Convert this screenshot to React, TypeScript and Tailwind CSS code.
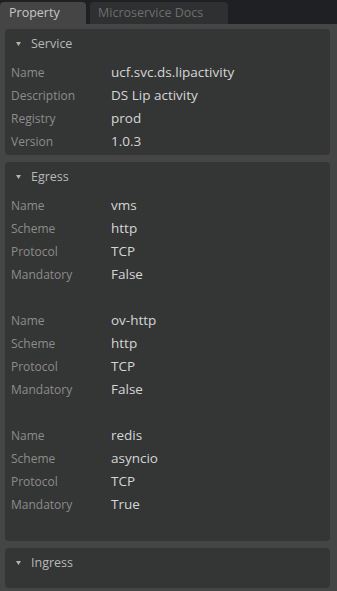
import React from "react";

type Row = [string, string];

const service: Row[] = [
  ["Name", "ucf.svc.ds.lipactivity"],
  ["Description", "DS Lip activity"],
  ["Registry", "prod"],
  ["Version", "1.0.3"],
];

const egress: Row[][] = [
  [
    ["Name", "vms"],
    ["Scheme", "http"],
    ["Protocol", "TCP"],
    ["Mandatory", "False"],
  ],
  [
    ["Name", "ov-http"],
    ["Scheme", "http"],
    ["Protocol", "TCP"],
    ["Mandatory", "False"],
  ],
  [
    ["Name", "redis"],
    ["Scheme", "asyncio"],
    ["Protocol", "TCP"],
    ["Mandatory", "True"],
  ],
];

function Field({ label, value }: { label: string; value: string }) {
  return (
    <div className="flex h-[23px] items-center">
      <span className="w-[100px] shrink-0 text-[12px] text-[#8c8c8c]">{label}</span>
      <span className="text-[13.5px] text-[#d6d6d6]">{value}</span>
    </div>
  );
}

function Section({ title, children }: { title: string; children?: React.ReactNode }) {
  return (
    <div className="rounded-[4px] bg-[#343535] pt-[5px]">
      <div className="flex h-[20px] items-center pl-[6px]">
        <svg width="5" height="4" viewBox="0 0 5 4" className="ml-[5px] mr-[10px]">
          <path d="M0 0 H5 L2.5 4 Z" fill="#b4b4b4" />
        </svg>
        <span className="text-[12.5px] text-[#b8b8b8]">{title}</span>
      </div>
      {children ? (
        <div className="pl-[6px] pt-[7px] pb-[2px]">{children}</div>
      ) : (
        <div className="h-[15px]" />
      )}
    </div>
  );
}

export default function App() {
  return (
    <div
      className="flex h-[591px] w-[337px] flex-col overflow-hidden bg-[#1f2023] text-[12px]"
      style={{ fontFamily: '"Open Sans", "Liberation Sans", sans-serif' }}
    >
      {/* tabs */}
      <div className="flex h-[24px] items-end gap-[4px]">
        <div className="flex h-[22px] w-[86px] items-center rounded-t-[4px] bg-[#454545] pl-[9px] text-[12.5px] text-[#c6c6c6]">
          Property
        </div>
        <div className="flex h-[22px] w-[138px] items-center rounded-t-[4px] bg-[#2f3031] pl-[8px] text-[12.5px] text-[#6e6e6e]">
          Microservice Docs
        </div>
      </div>

      {/* body */}
      <div className="flex flex-1 flex-col gap-[7px] bg-[#454545] pl-[5px] pr-[7px] pt-[5px]">
        <Section title="Service">
          {service.map(([l, v]) => (
            <Field key={l} label={l} value={v} />
          ))}
        </Section>
        <Section title="Egress">
          {egress.map((group, i) => (
            <div key={i}>
              {group.map(([l, v]) => (
                <Field key={l} label={l} value={v} />
              ))}
              <div className="h-[23px]" />
            </div>
          ))}
        </Section>
        <Section title="Ingress" />
      </div>
    </div>
  );
}
